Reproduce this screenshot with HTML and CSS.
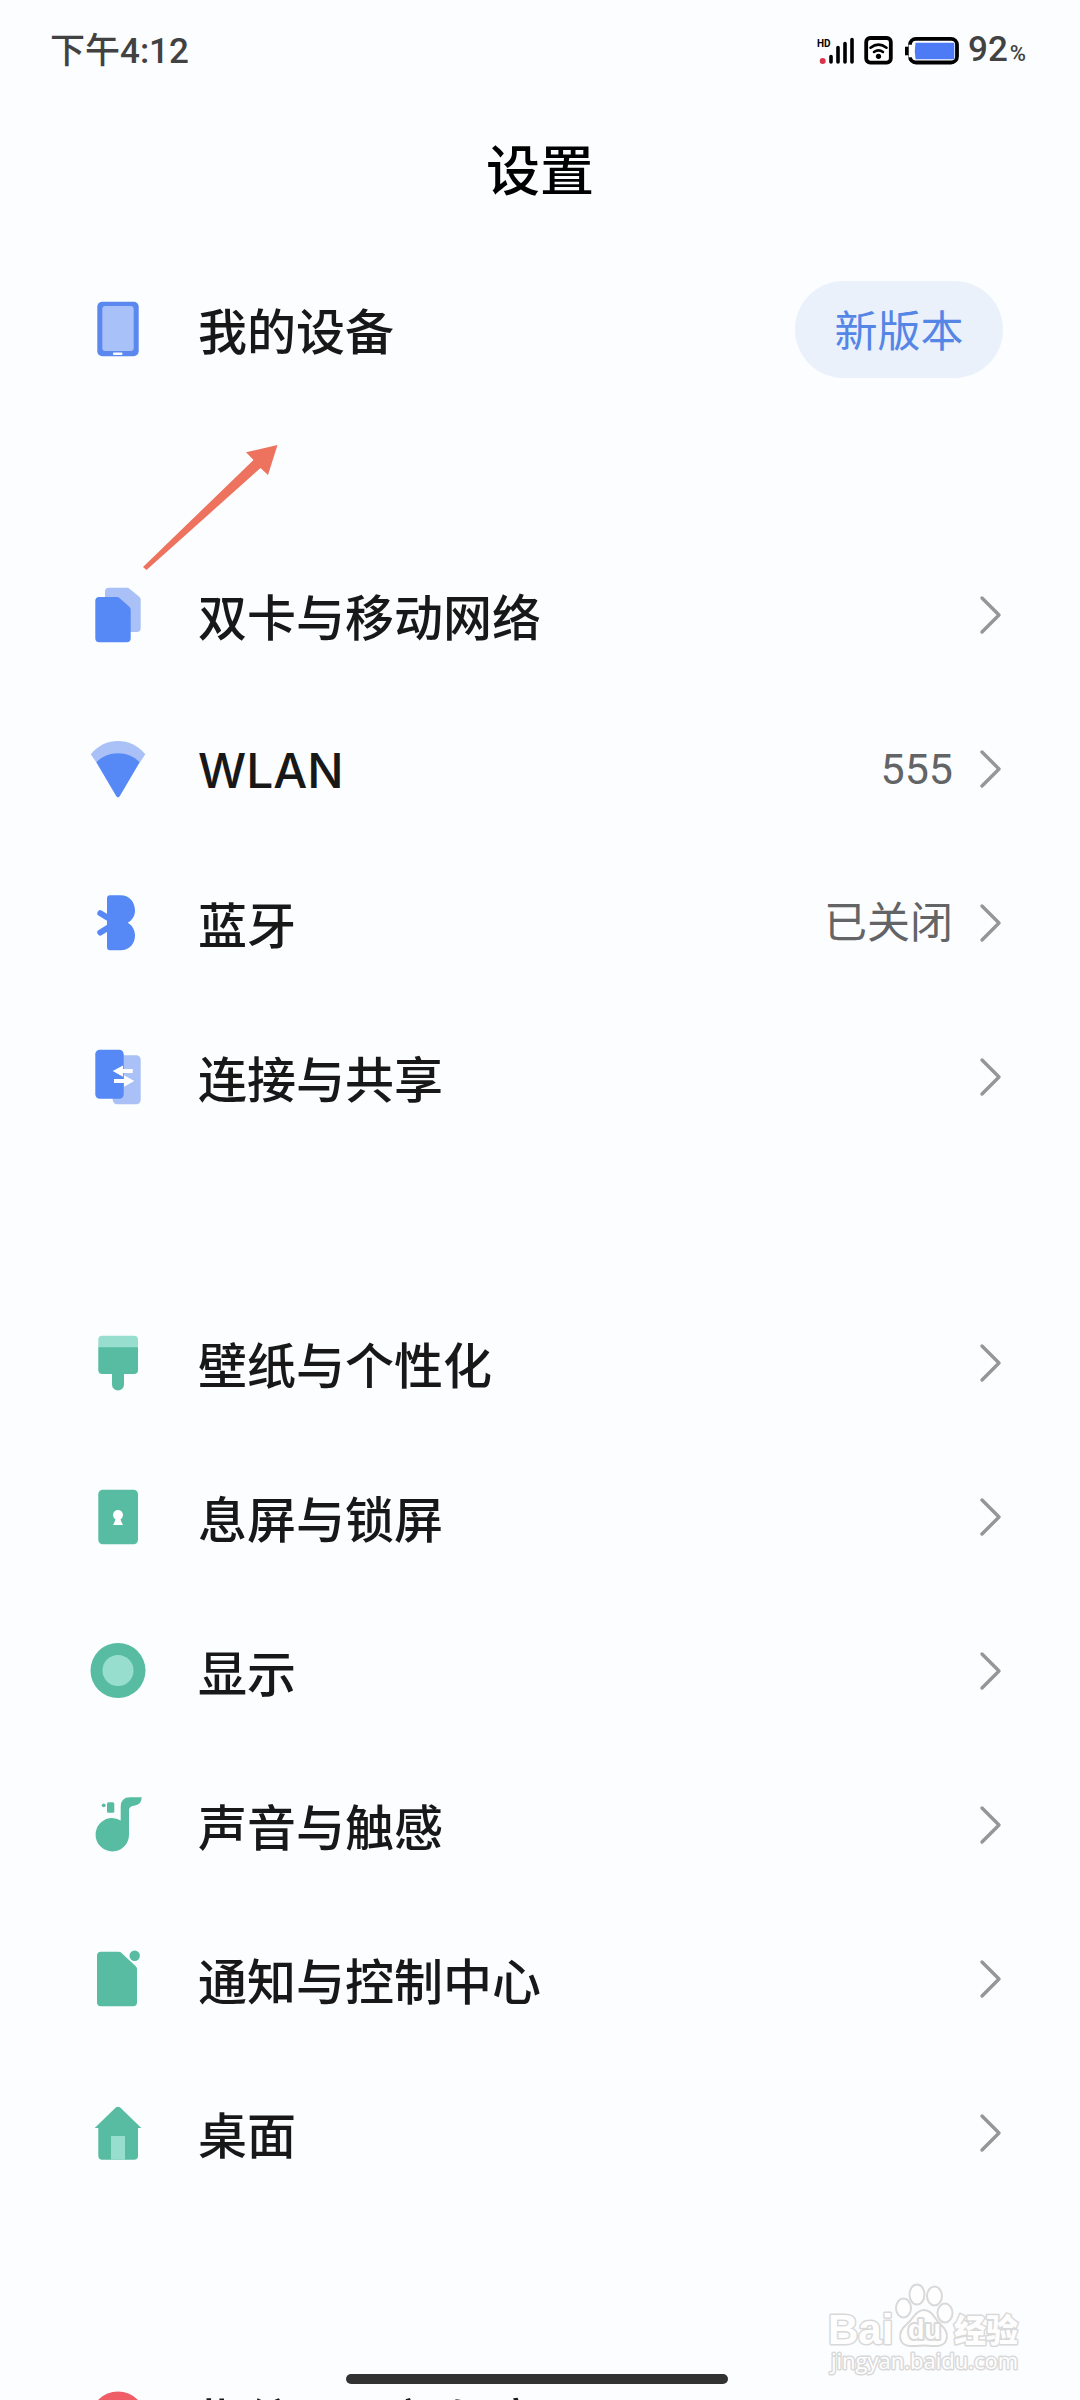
FILE: index.html
```html
<!DOCTYPE html>
<html lang="zh-CN">
<head>
<meta charset="utf-8">
<meta name="viewport" content="width=device-width, initial-scale=1">
<title>设置</title>
<link rel="stylesheet" href="styles.css">
</head>
<body>
<svg class="defs" aria-hidden="true">
  <symbol id="chevron" viewBox="0 0 24 44"><path d="M3 5 20 22 3 39" fill="none" stroke="#969696" stroke-width="3.4" stroke-linecap="round" stroke-linejoin="round"/></symbol>
</svg>
<div class="screen">
  <header class="status">
    <time class="clock">下午4:12</time>
    <div class="indicators">
      <svg class="status-icons" viewBox="0 0 146 30" role="img" aria-label="信号、WLAN、电池">
        <text x="1" y="11" class="hd">HD</text>
        <circle cx="6.7" cy="25" r="3" fill="#d8344a"/>
        <path d="M15 20.500V26M22 11.500V26M29 7.500V26M36 3.500V26" stroke="#000" stroke-width="3.600" stroke-linecap="round"/>
        <rect x="50.200" y="2" width="24.600" height="24.600" rx="4" fill="#fff" stroke="#000" stroke-width="3.800"/>
        <path d="M54.500 11.700Q62.500 5.500 70.500 11.700M58 16Q62.500 12.600 67 16" fill="none" stroke="#000" stroke-width="2.600" stroke-linecap="round"/>
        <circle cx="62.500" cy="20.300" r="2.600"/>
        <rect x="94" y="2.800" width="47" height="23.700" rx="6" fill="#fff" stroke="#000" stroke-width="3.800"/>
        <path d="M92.500 8.700h4v12.600h-4z" fill="#fff"/>
        <path d="M89 10.700h3.500v8.600H89z"/>
        <path d="M99.500 6.700H137a1.300 1.300 0 0 1 1.300 1.300V22a1.300 1.300 0 0 1-1.300 1.300H99.500Q98 15 99.500 6.700z" fill="#4d7af5"/>
      </svg>
      <span class="battery">92<small>%</small></span>
    </div>
  </header>

  <h1 class="title">设置</h1>

  <main>
    <section class="group">
      <div class="row">
        <svg class="icon" viewBox="0 0 60 60"><rect x="9.300" y="2.700" width="41.400" height="54.600" rx="5" fill="#5a88ee"/><rect x="14.300" y="7" width="31.400" height="45" rx="3" fill="#a8c1f9"/><rect x="25" y="53.500" width="9.500" height="2.500" rx="1" fill="#fff"/></svg>
        <span class="label">我的设备</span>
        <button class="badge" type="button">新版本</button>
      </div>
    </section>

    <nav class="group">
      <a class="row" href="#sim">
        <svg class="icon" viewBox="0 0 60 60"><path d="M21 2.700H39Q40.500 2.700 41.500 3.700L51.500 12Q52.700 13 52.700 14.500V43a4 4 0 0 1-4 4H21a4 4 0 0 1-4-4V6.700a4 4 0 0 1 4-4z" fill="#a9c1f6"/><path d="M11.300 12H29Q30.500 12 31.500 13L41.500 22Q42.700 23 42.700 24.500V53.300a4 4 0 0 1-4 4H11.300a4 4 0 0 1-4-4V16a4 4 0 0 1 4-4z" fill="#5689f6"/></svg>
        <span class="label">双卡与移动网络</span>
        <svg class="chevron"><use href="#chevron"/></svg>
      </a>
      <a class="row" href="#wlan">
        <svg class="icon" viewBox="0 0 60 60"><path d="M2.700 15.300C17-2.400 43-2.400 57.300 15.300L52 23.300H8.300z" fill="#a9c1f6"/><path d="M8.300 23.300C20 11.300 40 11.300 51.700 23.300L31.700 57.300Q30 59.500 28.300 57.300z" fill="#5689f6"/></svg>
        <span class="label latin">WLAN</span>
        <span class="value">555</span>
        <svg class="chevron"><use href="#chevron"/></svg>
      </a>
      <a class="row" href="#bluetooth">
        <svg class="icon" viewBox="0 0 60 60"><path d="M22 2.300H32.500C42 2.300 47 10 47 17.500C47 23 44 27.500 39.700 29.700C44 32 47 37 47 42.500C47 50 42 57.300 32.500 57.300H22a3 3 0 0 1-3-3V5.300a3 3 0 0 1 3-3z" fill="#5689f6"/><path d="M12.300 20.200 28 29.700 12.300 39.500" fill="none" stroke="#5689f6" stroke-width="6" stroke-linecap="round"/></svg>
        <span class="label">蓝牙</span>
        <span class="value">已关闭</span>
        <svg class="chevron"><use href="#chevron"/></svg>
      </a>
      <a class="row" href="#share">
        <svg class="icon" viewBox="0 0 60 60"><rect x="24.700" y="8.300" width="28" height="49" rx="4.500" fill="#a9c1f6"/><rect x="7.300" y="2.700" width="28.400" height="49" rx="4.500" fill="#5689f6"/><path d="M24.700 24 35 18.500V22H44.700V26H35V29.700zM46.300 34 36 28.300V32H26V36H36V39.700z" fill="#fff"/></svg>
        <span class="label">连接与共享</span>
        <svg class="chevron"><use href="#chevron"/></svg>
      </a>
    </nav>

    <nav class="group">
      <a class="row" href="#wallpaper">
        <svg class="icon" viewBox="0 0 60 60"><path d="M10.300 14H50V37a4 4 0 0 1-4 4H36V51.500a6 6 0 0 1-12 0V41H14.300a4 4 0 0 1-4-4z" fill="#57bca1"/><path d="M14.300 2.700H46a4 4 0 0 1 4 4V14.300H10.300V6.700a4 4 0 0 1 4-4z" fill="#98dece"/></svg>
        <span class="label">壁纸与个性化</span>
        <svg class="chevron"><use href="#chevron"/></svg>
      </a>
      <a class="row" href="#lock">
        <svg class="icon" viewBox="0 0 60 60"><rect x="10.300" y="2.700" width="39.700" height="54.600" rx="4.500" fill="#57bca1"/><circle cx="30" cy="28" r="5" fill="#fff"/><path d="M28 30H32L33 34 35 38H25L27 34z" fill="#fff"/></svg>
        <span class="label">息屏与锁屏</span>
        <svg class="chevron"><use href="#chevron"/></svg>
      </a>
      <a class="row" href="#display">
        <svg class="icon" viewBox="0 0 60 60"><circle cx="30" cy="29.500" r="27.500" fill="#57bca1"/><circle cx="30" cy="29.500" r="15.500" fill="#98dece"/></svg>
        <span class="label">显示</span>
        <svg class="chevron"><use href="#chevron"/></svg>
      </a>
      <a class="row" href="#sound">
        <svg class="icon" viewBox="0 0 60 60"><path d="M24 23Q29 23 32.700 25.500V12Q32.700 2.300 42 2.300H53.700Q53.700 9.500 47 10.500Q41 11 41 15V39.700A16.700 16.700 0 1 1 24 23z" fill="#57bca1"/><rect x="19" y="7.300" width="7.300" height="10.400" rx="1.500" fill="#57bca1"/><circle cx="15.700" cy="10.300" r="1.900" fill="#57bca1"/></svg>
        <span class="label">声音与触感</span>
        <svg class="chevron"><use href="#chevron"/></svg>
      </a>
      <a class="row" href="#notifications">
        <svg class="icon" viewBox="0 0 60 60"><path d="M13 2.700H30.500Q32.500 2.700 33.500 4L48 17.500Q49 18.500 49 20V53.300a4 4 0 0 1-4 4H13a4 4 0 0 1-4-4V6.700a4 4 0 0 1 4-4z" fill="#57bca1"/><circle cx="46.700" cy="6.700" r="5.200" fill="#57bca1"/></svg>
        <span class="label">通知与控制中心</span>
        <svg class="chevron"><use href="#chevron"/></svg>
      </a>
      <a class="row" href="#launcher">
        <svg class="icon" viewBox="0 0 60 60"><path d="M27.500 4.700Q30 2.700 32.500 4.700L53.300 25H50V52.700a4 4 0 0 1-4 4H14.300a4 4 0 0 1-4-4V25H6.700z" fill="#57bca1"/><path d="M23 33H37V56.700H23z" fill="#98dece"/></svg>
        <span class="label">桌面</span>
        <svg class="chevron"><use href="#chevron"/></svg>
      </a>
    </nav>

    <nav class="group">
      <a class="row" href="#security">
        <svg class="icon" viewBox="0 0 60 60"><circle cx="30" cy="30" r="27.500" fill="#ef5d66"/></svg>
        <span class="label">指纹、面部与密码</span>
        <svg class="chevron"><use href="#chevron"/></svg>
      </a>
    </nav>
  </main>

  <svg class="pointer" viewBox="0 0 140 134" aria-hidden="true"><path d="M3 127 113.500 20 106 12.300 137.500 5 128 35 120.500 28 6.500 130z" fill="#ee735e"/></svg>

  <svg class="watermark" viewBox="0 0 206 108" role="img" aria-label="Baidu经验">
    <g fill="#fefefe" stroke="#d9d9d9" stroke-width="2" stroke-linejoin="round">
      <text class="wm-logo" x="2" y="62">Bai</text>
      <ellipse cx="77.500" cy="26" rx="7.500" ry="9.500"/>
      <ellipse cx="91" cy="12.500" rx="7.500" ry="10"/>
      <ellipse cx="108.500" cy="14" rx="7.500" ry="9.500"/>
      <ellipse cx="119" cy="31" rx="7.500" ry="9.500"/>
      <path d="M98 28C106 28 109 37 114 42C125 51 122 64 111 64C104 64.500 102 63.500 98 63.500S91 64.500 84 64C73 64 70 51 81 42C87 37 90 28 98 28z"/>
      <text class="wm-du" x="82" y="57">du</text>
      <text class="wm-cn" x="128" y="60">经验</text>
      <text class="wm-url" x="5" y="87">jingyan.baidu.com</text>
    </g>
  </svg>
  <div class="home-bar"></div>
</div>
</body>
</html>
```
FILE: styles.css
```css
* {
  box-sizing: border-box;
}

body {
  margin: 0;
  background: #fbfdff;
  color: #181818;
  font-family: Roboto, "Noto Sans CJK SC", sans-serif;
}

.defs {
  display: none;
}

.screen {
  position: relative;
  height: 100vh;
  overflow: hidden;
}

.status {
  display: flex;
  align-items: center;
  justify-content: space-between;
  height: 102px;
  padding: 0 54px 0 50px;
  color: #424242;
  font-size: 35px;
  font-weight: 500;
  line-height: 44px;
}

.clock,
.battery {
  padding-top: 2px;
}

.indicators {
  display: flex;
  align-items: center;
  gap: 6px;
}

.status-icons {
  width: 146px;
  height: 30px;
}

.hd {
  font: 700 10px Roboto, sans-serif;
}

.battery small {
  margin-left: 2px;
  font-size: 22px;
}

.title {
  margin: 16px 0 24px;
  color: #000;
  font-size: 54px;
  font-weight: 500;
  line-height: 110px;
  text-align: center;
}

.group {
  margin-bottom: 132px;
}

.row {
  display: flex;
  align-items: center;
  height: 154px;
  padding: 0 77px 0 88px;
  color: inherit;
  text-decoration: none;
}

.icon {
  flex: none;
  width: 60px;
  height: 60px;
  margin-right: 50px;
}

.label {
  flex: 1;
  font-family: "Noto Sans CJK SC", sans-serif;
  font-size: 49px;
  font-weight: 500;
  line-height: 70px;
}

.latin {
  padding-top: 4px;
  font-family: Inter, sans-serif;
  font-size: 48px;
}

.value {
  color: #636465;
  font-size: 43px;
  line-height: 64px;
}

.chevron {
  flex: none;
  width: 24px;
  height: 44px;
  margin-left: 26px;
}

.badge {
  width: 208px;
  height: 97px;
  padding: 0 0 2px;
  border: 0;
  border-radius: 49px;
  background: #eaf1fb;
  color: #5586e6;
  font-family: inherit;
  font-size: 43px;
}

/* Overlays */
.pointer {
  position: absolute;
  top: 440px;
  left: 140px;
  width: 140px;
  height: 134px;
}

.watermark {
  position: absolute;
  right: 48px;
  bottom: 10px;
  width: 206px;
  height: 108px;
}

.watermark text {
  paint-order: stroke;
  stroke-width: 3px;
}

.wm-logo {
  font: 700 42px "Liberation Sans", sans-serif;
}

.watermark .wm-du {
  font: 700 27px "Liberation Sans", sans-serif;
  stroke-width: 4px;
}

.wm-cn {
  font: 900 32px "Noto Sans CJK SC", sans-serif;
}

.wm-url {
  font: 400 22px "Open Sans", sans-serif;
}

.home-bar {
  position: absolute;
  bottom: 16px;
  left: 50%;
  width: 382px;
  height: 10px;
  margin-left: -194px;
  border-radius: 5px;
  background: #323232;
}
```
